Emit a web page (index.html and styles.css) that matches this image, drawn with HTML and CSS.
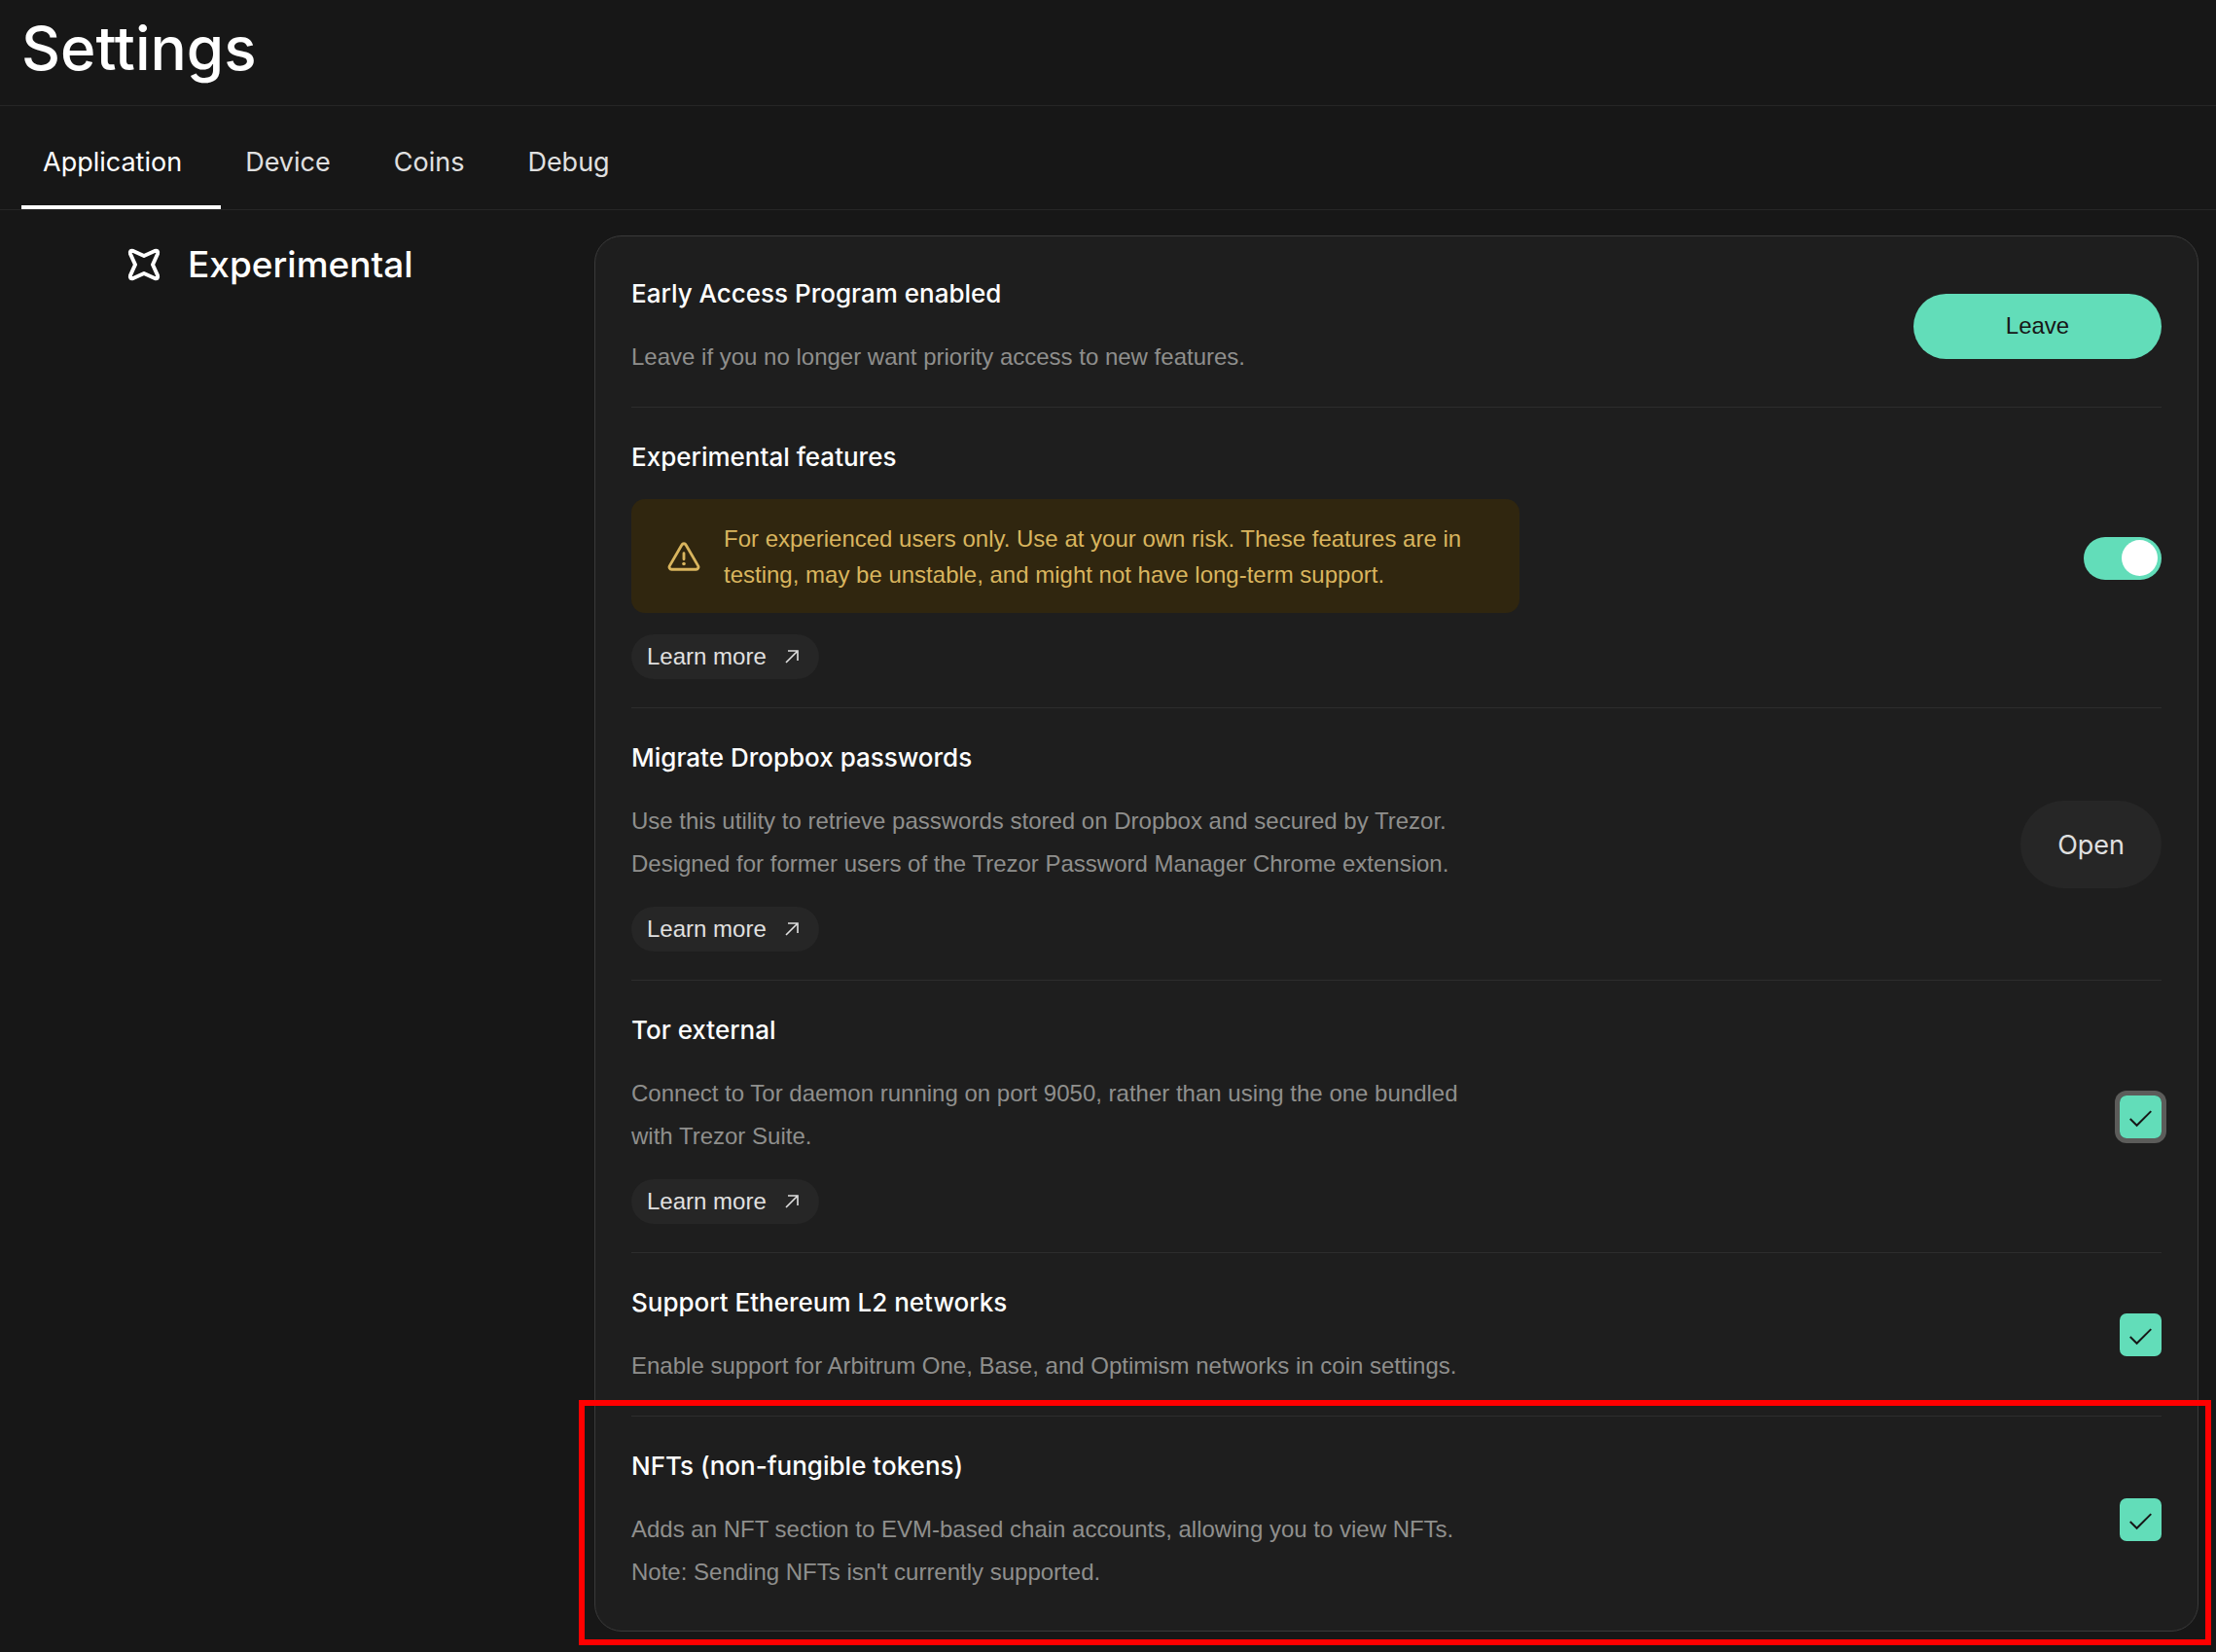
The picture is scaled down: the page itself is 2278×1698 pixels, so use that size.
FILE: index.html
```html
<!DOCTYPE html>
<html lang="en">
<head>
<meta charset="utf-8">
<meta name="viewport" content="width=device-width, initial-scale=1">
<title>Settings</title>
<link rel="stylesheet" href="styles.css">
</head>
<body>
<svg class="sprite" aria-hidden="true">
  <symbol id="arrow" viewBox="0 0 18 18"><path d="M2 15 13 4M4 3H14V13" fill="none" stroke="currentColor" stroke-width="1.600"/></symbol>
</svg>
<header class="header"><h1 class="header-title">Settings</h1></header>
<nav class="tabs" aria-label="Settings sections">
  <a class="tab tab-active" href="#application" aria-current="page">Application</a>
  <a class="tab" href="#device">Device</a>
  <a class="tab" href="#coins">Coins</a>
  <a class="tab" href="#debug">Debug</a>
</nav>
<main class="section">
  <h2 class="section-heading">
    <svg class="section-icon" viewBox="0 0 34 34" aria-hidden="true"><path d="M6 3 17 8 28 3Q32 2 31 6L26 17 31 28Q32 32 28 31L17 26 6 31Q2 32 3 28L8 17 3 6Q2 2 6 3Z" fill="none" stroke="currentColor" stroke-width="4" stroke-linejoin="round"/></svg>
    Experimental
  </h2>
  <div class="card">
    <section class="row">
      <div class="row-text">
        <h3 class="row-title">Early Access Program enabled</h3>
        <p class="row-desc">Leave if you no longer want priority access to new features.</p>
      </div>
      <button class="button button-primary" type="button">Leave</button>
    </section>
    <section class="row">
      <div class="row-text">
        <h3 class="row-title" id="experimental">Experimental features</h3>
        <div class="alert">
          <svg class="alert-icon" viewBox="0 0 36 32" aria-hidden="true"><path d="M15.800 3.300 2.500 26.200A2.500 2.500 0 0 0 4.700 30H31.300A2.500 2.500 0 0 0 33.500 26.200L20.200 3.300A2.500 2.500 0 0 0 15.800 3.300ZM18 12.500V19" fill="none" stroke="currentColor" stroke-width="3" stroke-linecap="round" stroke-linejoin="round"/><circle cx="18" cy="24" r="1.900" fill="currentColor"/></svg>
          <p class="alert-text">For experienced users only. Use at your own risk. These features are in testing, may be unstable, and might not have long-term support.</p>
        </div>
        <a class="learn" href="#learn-experimental">Learn more <svg class="learn-icon" aria-hidden="true"><use href="#arrow"/></svg></a>
      </div>
      <input class="switch" type="checkbox" role="switch" aria-labelledby="experimental" checked>
    </section>
    <section class="row">
      <div class="row-text">
        <h3 class="row-title">Migrate Dropbox passwords</h3>
        <p class="row-desc">Use this utility to retrieve passwords stored on Dropbox and secured by Trezor.<br>Designed for former users of the Trezor Password Manager Chrome extension.</p>
        <a class="learn" href="#learn-dropbox">Learn more <svg class="learn-icon" aria-hidden="true"><use href="#arrow"/></svg></a>
      </div>
      <button class="button button-secondary" type="button">Open</button>
    </section>
    <section class="row">
      <div class="row-text">
        <h3 class="row-title" id="tor">Tor external</h3>
        <p class="row-desc">Connect to Tor daemon running on port 9050, rather than using the one bundled with Trezor Suite.</p>
        <a class="learn" href="#learn-tor">Learn more <svg class="learn-icon" aria-hidden="true"><use href="#arrow"/></svg></a>
      </div>
      <span class="check check-focused"><input class="check-input" type="checkbox" aria-labelledby="tor" checked><svg class="check-mark" viewBox="0 0 44 44" aria-hidden="true"><path d="M11 24 18 31 33 16"/></svg></span>
    </section>
    <section class="row">
      <div class="row-text">
        <h3 class="row-title" id="l2">Support Ethereum L2 networks</h3>
        <p class="row-desc">Enable support for Arbitrum One, Base, and Optimism networks in coin settings.</p>
      </div>
      <span class="check"><input class="check-input" type="checkbox" aria-labelledby="l2" checked><svg class="check-mark" viewBox="0 0 44 44" aria-hidden="true"><path d="M11 24 18 31 33 16"/></svg></span>
    </section>
    <section class="row row-highlighted">
      <div class="row-text">
        <h3 class="row-title" id="nfts">NFTs (non-fungible tokens)</h3>
        <p class="row-desc">Adds an NFT section to EVM-based chain accounts, allowing you to view NFTs.<br>Note: Sending NFTs isn't currently supported.</p>
      </div>
      <span class="check"><input class="check-input" type="checkbox" aria-labelledby="nfts" checked><svg class="check-mark" viewBox="0 0 44 44" aria-hidden="true"><path d="M11 24 18 31 33 16"/></svg></span>
    </section>
  </div>
</main>
</body>
</html>
```
FILE: styles.css
```css
* { box-sizing: border-box; }
body {
  margin: 0;
  background: #171717;
  color: #fff;
  font-family: Inter, "Liberation Sans", sans-serif;
}
h1, h2, h3, p { margin: 0; font-weight: 500; }
a { color: inherit; text-decoration: none; }
.sprite { display: none; }

.header { padding: 14px 22px 22px; border-bottom: 1px solid #262626; }
.header-title { font-size: 62px; line-height: 72px; }

.tabs { display: flex; gap: 3px; padding: 0 22px; border-bottom: 1px solid #262626; }
.tab {
  padding: 38px 40px 24px 22px;
  border-bottom: 4px solid transparent;
  font-size: 27px;
  line-height: 40px;
  color: #e0e0e0;
}
.tab-active { color: #fff; border-color: #fff; }

.section {
  display: grid;
  grid-template-columns: 480px minmax(0, 1fr);
  padding: 26px 18px 20px 131px;
}
.section-heading {
  display: flex;
  align-items: center;
  align-self: start;
  gap: 28px;
  padding-top: 6px;
  font-size: 37px;
  line-height: 48px;
  font-weight: 500;
}
.section-icon { width: 34px; height: 34px; }

.card {
  padding: 8px 37px 9px;
  background: #1e1e1e;
  border: 1px solid #3a3a3a;
  border-radius: 28px;
}
.row {
  display: flex;
  align-items: center;
  justify-content: space-between;
  gap: 40px;
  padding: 30px 0 29px;
  border-bottom: 1px solid #2d2d2d;
}
.row:last-child { border-bottom: 0; }
.row-text { display: flex; flex-direction: column; align-items: flex-start; gap: 22px; max-width: 913px; }
.row-title { font-size: 26px; line-height: 42px; }
.row-desc { max-width: 880px; font: 400 24px/44px "Liberation Sans", sans-serif; color: #8f8f8d; }

.row-highlighted { position: relative; }
.row-highlighted::after {
  content: "";
  position: absolute;
  inset: -17px -51px -24px -54px;
  border: 6px solid #f00;
  pointer-events: none;
}

.alert {
  display: flex;
  align-items: center;
  gap: 24px;
  padding: 22px 37px 21px;
  background: #30260f;
  border-radius: 14px;
  color: #d9b55e;
}
.alert-icon { flex: none; width: 34px; height: 32px; }
.alert-text { font: 400 24px/37px "Liberation Sans", sans-serif; }

.learn {
  display: flex;
  align-items: center;
  gap: 18px;
  height: 46px;
  padding: 0 18px 0 16px;
  background: #262626;
  border-radius: 23px;
  color: #e0e0e0;
  font: 400 24px "Liberation Sans", sans-serif;
}
.learn-icon { width: 18px; height: 18px; }

.button { flex: none; border: 0; font: 400 24px "Liberation Sans", sans-serif; }
.button-primary { width: 255px; height: 67px; border-radius: 34px; background: #62ddb9; color: #171717; }
.button-secondary { padding: 0 38px; height: 90px; border-radius: 45px; background: #262626; color: #e0e0e0; font-family: Inter, sans-serif; font-size: 27px; }

.switch {
  appearance: none;
  display: flex;
  align-items: center;
  justify-content: flex-end;
  flex: none;
  width: 80px;
  height: 44px;
  margin: 0;
  padding: 0 4px;
  border-radius: 22px;
  background: #62ddb9;
}
.switch::before { content: ""; width: 37px; height: 37px; border-radius: 50%; background: #fff; }

.check { display: grid; flex: none; width: 43px; height: 44px; border-radius: 7px; }
.check-input, .check-mark { grid-area: 1 / 1; width: 100%; height: 100%; }
.check-input { appearance: none; margin: 0; border-radius: 7px; background: #62ddb9; }
.check-mark { pointer-events: none; fill: none; stroke: #171717; stroke-width: 2; }
.check-focused { box-shadow: 0 0 0 5px #5c5c5a; }
```
